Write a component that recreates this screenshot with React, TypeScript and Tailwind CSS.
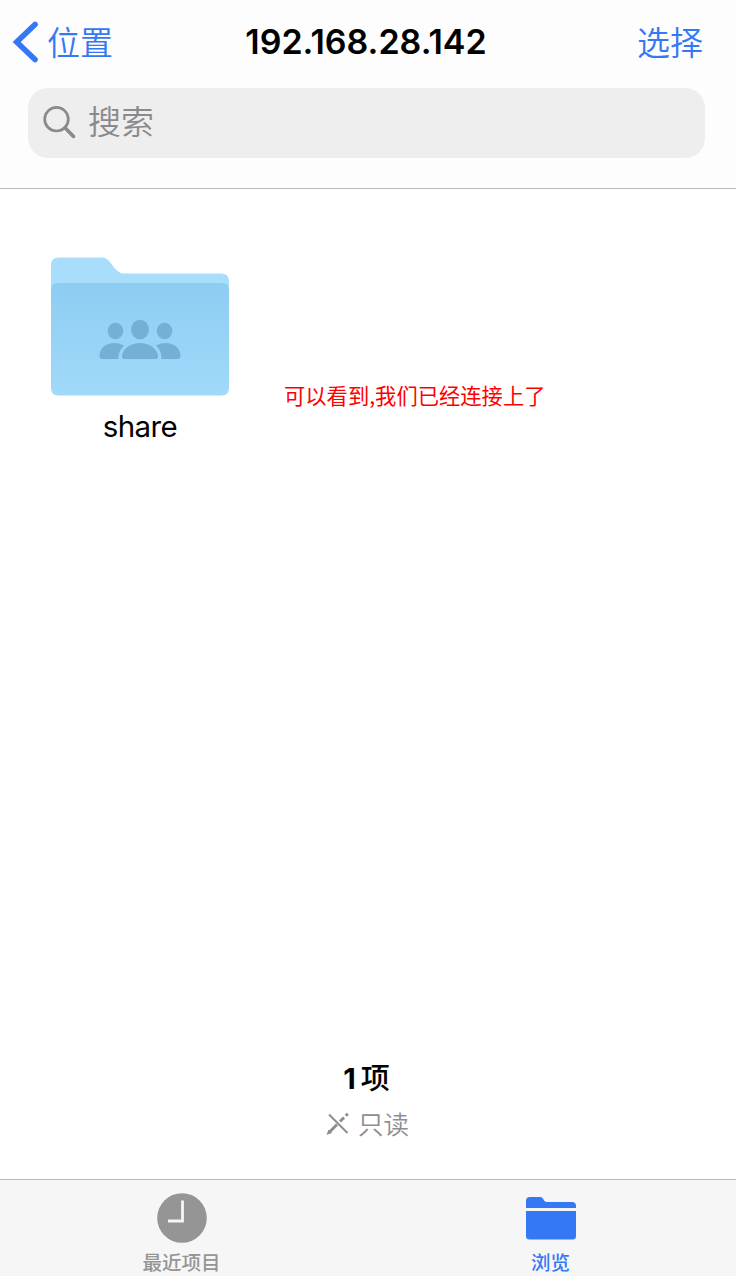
import React from "react";

const cjk = "font-['Inter','Noto_Sans_CJK_SC',sans-serif]";

function NavBar() {
  return (
    <div className="grid h-[88px] grid-cols-[1fr_auto_1fr] items-center pl-[12px] pr-[33px]">
      <button className="flex items-center gap-[7px] text-[#3478f6]">
        <svg className="mt-[-4px] h-[44px] w-[28px]" viewBox="0 0 28 44" fill="none">
          <path d="M23 4.500 4.700 22 23 39.500" stroke="currentColor" strokeWidth="5.600" strokeLinecap="round" strokeLinejoin="miter" />
        </svg>
        <span className="mt-[-2px] font-[350] text-[33px] leading-[40px]">位置</span>
      </button>
      <h1 className="ml-[17px] mt-[-4px] text-[34px] font-semibold leading-[40px] text-black">192.168.28.142</h1>
      <button className="mt-[-2px] justify-self-end font-[350] text-[33px] leading-[40px] text-[#3478f6]">选择</button>
    </div>
  );
}

function SearchField() {
  return (
    <div className="ml-[28px] mr-[31px] flex h-[70px] items-center rounded-[20px] bg-[#eeeeee] pl-[14px] text-[#8a8a8e]">
      <svg className="h-[36px] w-[36px]" viewBox="0 0 36 36" fill="none" stroke="currentColor">
        <circle cx="14.5" cy="14.2" r="11.8" strokeWidth="2.7" />
        <path d="m23 22.7 8.5 8.7" strokeWidth="3.6" strokeLinecap="round" />
      </svg>
      <span className="ml-[10px] mt-[-3px] font-[350] text-[33px] leading-[40px]">搜索</span>
    </div>
  );
}

function SharedFolder() {
  return (
    <div className="ml-[51px] mt-[68px] flex w-[178px] flex-col items-center">
      <svg className="h-[139px] w-[178px]" viewBox="0 0 178 139">
        <defs>
          <linearGradient id="folderFront" x1="0" y1="0" x2="0" y2="1">
            <stop offset="0" stopColor="#8dcdf2" />
            <stop offset="1" stopColor="#a1d9f9" />
          </linearGradient>
        </defs>
        <path d="M0 8Q0 .5 8 .5h42c5 0 7 2 10 6l3 4c4 4 6 6 11 6h96q8 0 8 8V60H0Z" fill="#a9ddfc" />
        <path d="M0 33q0-7 7-7h164q7 0 7 7v98q0 7.500-8 7.500H8q-8 0-8-7.500Z" fill="url(#folderFront)" />
        <g fill="#76afd6">
          <ellipse cx="64.500" cy="74" rx="7.800" ry="8.200" />
          <ellipse cx="113.500" cy="74" rx="7.800" ry="8.200" />
          <ellipse cx="89" cy="72.500" rx="9" ry="9.800" />
          <path d="M51 102h16.500c0-7 2-9.500 5.500-13.500-11-6-24.500-1-24.500 10.500q0 3 2.500 3Z" />
          <path d="M127 102h-16.500c0-7-2-9.500-5.500-13.500 11-6 24.500-1 24.500 10.500q0 3-2.500 3Z" />
          <path d="M74 102q-4 0-3-4c1.500-7 9-12 18-12s16.500 5 18 12q1 4-3 4Z" />
        </g>
      </svg>
      <span className="mt-[10px] text-[29.500px] leading-[40px] tracking-[-0.6px] text-black">share</span>
    </div>
  );
}

function FolderSummary() {
  return (
    <div className="flex flex-col items-center pr-[3px]">
      <p className="text-[29px] font-bold leading-[40px] text-black">
        1<span className="ml-[5px] font-medium">项</span>
      </p>
      <div className="mt-[8px] flex items-center gap-[8px] pl-[2px] text-[#8e8e92]">
        <svg className="mt-[-3px] h-[24px] w-[24px]" viewBox="0 0 24 24" fill="none" stroke="currentColor">
          <path d="m3 2.500 18.500 18.500" strokeWidth="1.900" />
          <path d="m4 19.500 7-7M14 9.500l4-4M19.800 3.700l2-2" strokeWidth="3" />
          <path d="m.5 23 2-5.500 3.500 3.500Z" fill="currentColor" stroke="none" />
        </svg>
        <span className="font-[350] text-[25.500px] leading-[36px]">只读</span>
      </div>
    </div>
  );
}

function TabBar() {
  return (
    <nav className="grid h-[97px] grid-cols-[363px_375px] overflow-hidden border-t border-[#b9b9b9] bg-[#f6f6f6]">
      <button className="flex flex-col items-center pt-[13px] text-[#959595]">
        <svg className="h-[50px] w-[50px]" viewBox="0 0 50 50">
          <circle cx="25" cy="25" r="24.800" fill="currentColor" />
          <path d="M25.500 7.500v20.500H11" fill="none" stroke="#f6f6f6" strokeWidth="2.800" />
        </svg>
        <span className="mt-[6px] text-[19.500px] font-medium leading-[28px]">最近项目</span>
      </button>
      <button className="flex flex-col items-center pt-[13px] text-[#3478f6]">
        <svg className="h-[50px] w-[50px]" viewBox="0 0 50 50" fill="currentColor">
          <path d="M0 15V8q0-4 4-4h10c4 0 3 5 7 5h25q4 0 4 4v2Z" />
          <path d="M0 18h50v25q0 3.500-3.500 3.500h-43Q0 46.500 0 43Z" />
        </svg>
        <span className="mt-[6px] text-[19.500px] font-medium leading-[28px]">浏览</span>
      </button>
    </nav>
  );
}

export default function App() {
  return (
    <div className={`${cjk} flex h-[1276px] w-[736px] flex-col overflow-hidden bg-white`}>
      <header className="h-[189px] shrink-0 border-b border-[#b9bbbb] bg-[#fdfdfd]">
        <NavBar />
        <SearchField />
      </header>
      <main className="relative flex flex-1 flex-col justify-between pb-[36px]">
        <SharedFolder />
        <p className="absolute left-[284px] top-[190px] whitespace-nowrap text-[21.300px] leading-[32px] text-[#ff0000] font-['Noto_Sans_CJK_SC',sans-serif]">
          可以看到,我们已经连接上了
        </p>
        <FolderSummary />
      </main>
      <TabBar />
    </div>
  );
}
